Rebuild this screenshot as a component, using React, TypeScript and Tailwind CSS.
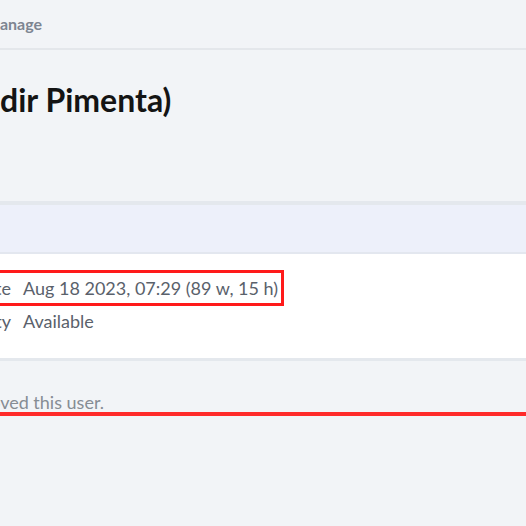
import React from 'react';

const rows = [
  { label: 'Registration date', value: 'Aug 18 2023, 07:29 (89 w, 15 h)', marked: true },
  { label: 'Availability', value: 'Available', marked: false },
];

const App = () => {
  return (
    <div className="w-[526px] h-[526px] overflow-hidden bg-[#f2f4f7] font-['Lato',sans-serif] text-[#141414]">
      <div className="h-[50px] flex items-center border-b-2 border-[#e4e7eb]">
        <span className="-ml-[15px] text-[16px] font-bold text-[#7d8591]">Manage</span>
      </div>

      <div className="h-[151px] pt-[31px]">
        <h1 className="-ml-[53px] text-[32px] font-bold leading-[38px] whitespace-nowrap">(Valdir Pimenta)</h1>
      </div>

      <section className="border-t-4 border-b-[3px] border-[#e4e8ed] bg-white">
        <div className="h-[49px] bg-[#edf0fa] border-b-2 border-[#e3e7ef]" />
        <dl className="pt-[16px] pb-[22px] text-[18px] text-[#5a616b]">
          {rows.map((row) => (
            <div key={row.label} className="flex items-center -ml-[172px]">
              <div
                className={`flex items-center pr-[3px] ${row.marked ? 'h-[36px] border-[3px] border-[#ff1a1a] pl-[10px]' : 'h-[30px] pl-[13px]'}`}
              >
                <dt className="w-[170px] text-right whitespace-nowrap">{row.label}</dt>
                <dd className="ml-[12px] whitespace-nowrap">{row.value}</dd>
              </div>
            </div>
          ))}
        </dl>
      </section>

      <div className="pt-[31px]">
        <p className="-ml-[144px] text-[18px] leading-[20px] text-[#868c94] whitespace-nowrap">Nobody has approved this user.</p>
        <div className="h-[4px] bg-[#ff2a2a]" />
      </div>
    </div>
  );
};

export default App;
